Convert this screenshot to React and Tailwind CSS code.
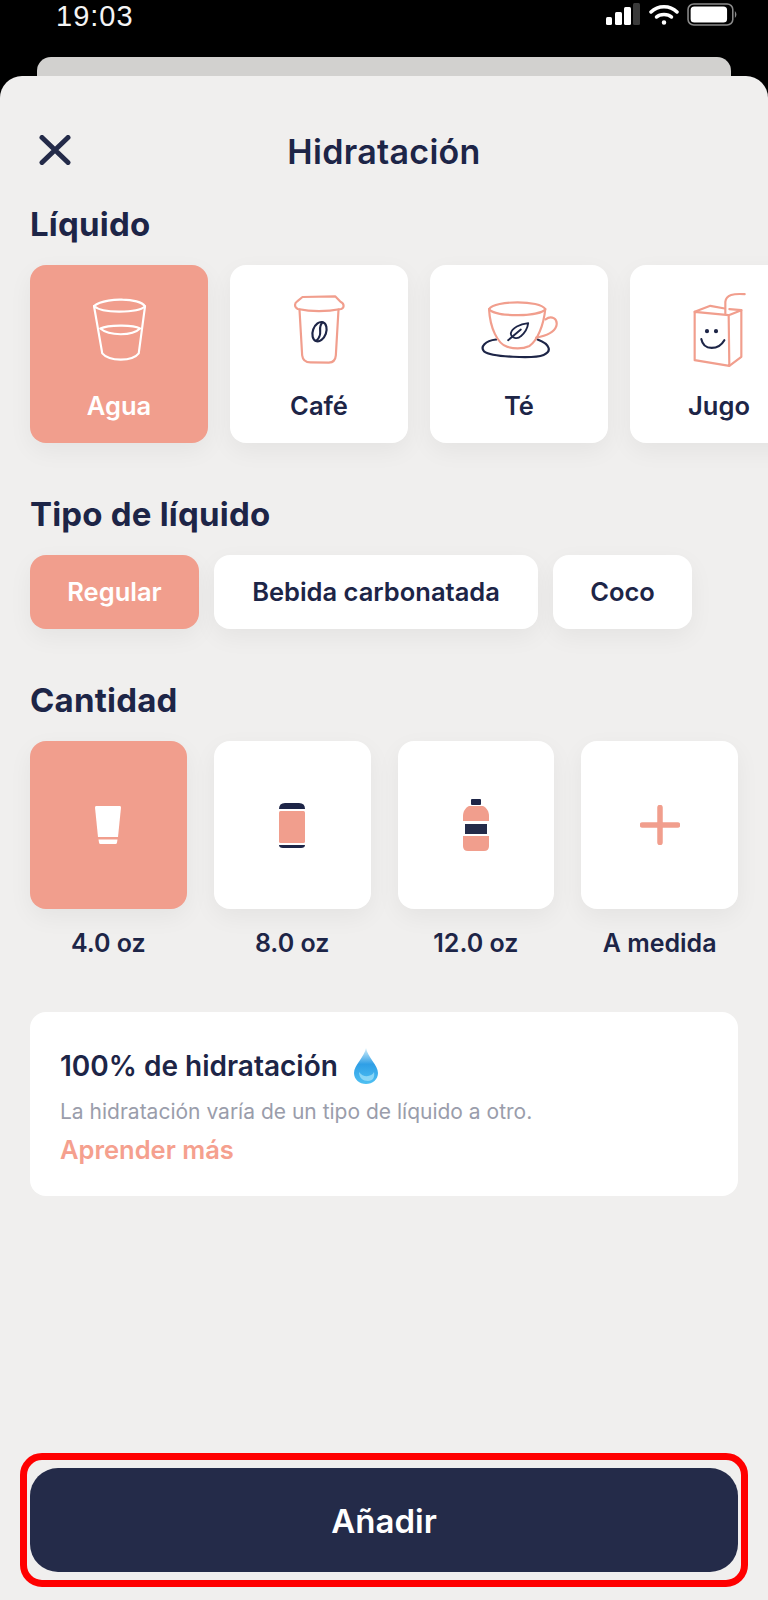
const SALMON = '#f19e8d';
const NAVY = '#1d2547';

const CloseIcon = () => (
    <svg viewBox="0 0 32 30" width="32" height="30" fill="none" stroke="#242b49" strokeWidth="5" strokeLinecap="round">
        <path d="M3 2.500 L29 27.500 M29 2.500 L3 27.500" />
    </svg>
);

const GlassIcon = () => (
    <svg viewBox="270 140 172 196" width="57" height="65" fill="none" stroke="#fff" strokeWidth="6.500" strokeLinecap="round" strokeLinejoin="round">
        <path d="M279 167 C300 150 345 147 365 148 C395 148 425 155 433 168 C420 182 385 184 355 184 C325 184 295 182 279 167 Z" />
        <path d="M279 167 L304 310 C325 335 395 335 414 310 L433 168" />
        <path d="M298 235 C320 225 395 222 418 235 C395 258 325 258 298 235 Z" />
    </svg>
);

const CoffeeIcon = () => (
    <svg viewBox="872 128 170 216" width="57" height="72" fill="none" strokeWidth="6.500" strokeLinecap="round" strokeLinejoin="round">
        <g stroke={SALMON}>
            <path d="M906 140 L1004 138 L1020 154 C1032 160 1032 172 1022 176 C980 184 930 184 892 176 C880 170 882 158 890 153 Z" />
            <path d="M897 178 L905 315 C907 332 918 336 930 336 L985 337 C1000 336 1005 328 1006 315 L1014 178" />
        </g>
        <g stroke={NAVY}>
            <ellipse cx="957" cy="244" rx="20" ry="30" transform="rotate(20 957 244)" />
            <path d="M966 216 C948 235 972 248 947 272" />
        </g>
    </svg>
);

const TeaIcon = () => (
    <svg viewBox="240 150 236 176" width="79" height="59" fill="none" strokeWidth="6.500" strokeLinecap="round" strokeLinejoin="round">
        <path d="M288 268 C255 272 240 290 252 303 C275 320 400 326 430 314 C455 304 450 282 412 268" stroke={NAVY} />
        <g stroke={SALMON}>
            <path d="M267 177 C285 150 420 150 435 177 C420 200 285 202 267 177 Z" />
            <path d="M267 177 C270 232 292 282 322 290 C345 296 370 295 388 287 C412 270 430 225 435 177" />
            <path d="M436 208 C452 195 474 204 468 228 C460 250 432 258 408 262" />
        </g>
        <g stroke={NAVY} strokeWidth="5.500">
            <path d="M384 219 C360 222 335 232 332 250 C333 264 352 268 362 258 C374 248 382 235 384 219 Z" />
            <path d="M324 270 L362 238" />
        </g>
    </svg>
);

const JuiceIcon = () => (
    <svg viewBox="880 118 162 230" width="54" height="77" fill="none" strokeWidth="6.500" strokeLinecap="round" strokeLinejoin="round">
        <g stroke={SALMON}>
            <path d="M888 180 L990 190 L992 342 L888 325 Z" />
            <path d="M990 190 L1028 175 L1028 315 L992 342" />
            <path d="M888 180 L935 162 L978 170 M992 172 L1028 175" />
            <path d="M980 185 L980 150 C982 128 1005 125 1038 127" />
        </g>
        <path d="M908 262 C915 298 960 295 977 265" stroke={NAVY} />
        <circle cx="925" cy="238" r="3" fill={NAVY} stroke={NAVY} />
        <circle cx="952" cy="238" r="3" fill={NAVY} stroke={NAVY} />
    </svg>
);

const SmallGlass = () => (
    <svg viewBox="0 0 26 38" width="26" height="38" fill="#fff">
        <path d="M1 0 H25 Q26 0 26 1.500 L23 31 H3 L0 1.500 Q0 0 1 0 Z" />
        <path d="M3.500 33.500 H22.500 L22 36.500 Q21.800 38 20.500 38 H5.500 Q4.200 38 4 36.500 Z" />
    </svg>
);

const SmallCan = () => (
    <svg viewBox="0 0 26 45" width="26" height="45">
        <path d="M0 6 Q0 0 6 0 H20 Q26 0 26 6 H0 Z" fill={NAVY} />
        <rect x="0" y="8" width="26" height="32" rx="1.500" fill={SALMON} />
        <path d="M0 42 H26 Q26 45 22 45 H4 Q0 45 0 42 Z" fill={NAVY} />
    </svg>
);

const SmallBottle = () => (
    <svg viewBox="0 0 26 52" width="26" height="52">
        <rect x="8" y="0" width="10" height="6" rx="1" fill={NAVY} />
        <path d="M6 7 H20 C24 9 26 13 26 17 V22 H0 V17 C0 13 2 9 6 7 Z" fill={SALMON} />
        <rect x="2" y="25" width="22" height="10" fill="#242b49" />
        <path d="M0 37 H26 V47 Q26 52 21 52 H5 Q0 52 0 47 Z" fill={SALMON} />
    </svg>
);

const SmallPlus = () => (
    <svg viewBox="0 0 40 40" width="40" height="40" fill="none" stroke={SALMON} strokeWidth="5.500" strokeLinecap="round">
        <path d="M20 2.500 V37.500 M2.500 20 H37.500" />
    </svg>
);

const Drop = () => (
    <svg viewBox="0 0 24 36" width="24" height="36">
        <defs>
            <linearGradient id="drop" x1="0" y1="0" x2="0" y2="1">
                <stop offset="0" stopColor="#d5f0fb" />
                <stop offset="0.45" stopColor="#2f9fe6" />
                <stop offset="1" stopColor="#4fc0f2" />
            </linearGradient>
        </defs>
        <path d="M12 0 C13.500 9 24 17 24 25 C24 31.500 18.500 36 12 36 C5.500 36 0 31.500 0 25 C0 17 10.500 9 12 0 Z" fill="url(#drop)" />
        <path d="M5 24 C5 30 9 33 14 33 C19 33 21 29 20 24 C18 29 9 30 5 24 Z" fill="#a8e4f9" opacity="0.7" />
    </svg>
);

const StatusIcons = () => (
    <div className="flex items-start">
        <svg viewBox="0 0 34 22" width="34" height="22" className="mt-[3px]">
            <rect x="0" y="14" width="6" height="8" rx="1.500" fill="#fff" />
            <rect x="9" y="9" width="7" height="13" rx="1.500" fill="#fff" />
            <rect x="18" y="4" width="7" height="18" rx="1.500" fill="#fff" />
            <rect x="27" y="0" width="7" height="22" rx="1.500" fill="#3a3a3a" />
        </svg>
        <svg viewBox="0 0 30 20" width="30" height="20" className="ml-[9px] mt-[5px]" fill="none" stroke="#fff" strokeWidth="3.500" strokeLinecap="round">
            <path d="M2 7 C9 0 21 0 28 7" />
            <path d="M7.500 12 C11 8.500 19 8.500 22.500 12" />
            <circle cx="15" cy="17.500" r="1.500" fill="#fff" strokeWidth="1.500" />
        </svg>
        <svg viewBox="0 0 49 23" width="51" height="23" className="ml-[8px] mt-[3px]" preserveAspectRatio="none">
            <rect x="1" y="1" width="43" height="21" rx="5.500" fill="none" stroke="#8a8a8a" strokeWidth="1.500" />
            <rect x="3.500" y="3.500" width="35" height="16" rx="3.500" fill="#fff" />
            <path d="M46 8 Q49 11.500 46 15 Z" fill="#8a8a8a" />
        </svg>
    </div>
);

const liquids = [
    { name: 'Agua', icon: GlassIcon, active: true },
    { name: 'Café', icon: CoffeeIcon },
    { name: 'Té', icon: TeaIcon },
    { name: 'Jugo', icon: JuiceIcon },
];

const types = [
    { name: 'Regular', width: 'w-[169px]', active: true },
    { name: 'Bebida carbonatada', width: 'w-[324px]' },
    { name: 'Coco', width: 'w-[139px]' },
];

const amounts = [
    { label: '4.0 oz', icon: SmallGlass, active: true },
    { label: '8.0 oz', icon: SmallCan },
    { label: '12.0 oz', icon: SmallBottle },
    { label: 'A medida', icon: SmallPlus },
];

const SectionTitle = ({ children, className }) => (
    <h2 className={`text-[33px] leading-[36px] font-bold tracking-[0.2px] text-[#1d2547] ${className}`}>{children}</h2>
);

export default function App() {
    return (
        <div className="w-[768px] h-[1600px] overflow-hidden bg-black flex flex-col font-['Inter',sans-serif]">
            <div className="h-[57px] shrink-0 pl-[56px] pr-[30px] flex justify-between items-start text-white">
                <span className="font-['Liberation_Sans',sans-serif] text-[29px] leading-[32px] tracking-[1px] text-[#f4f4f4]">19:03</span>
                <StatusIcons />
            </div>
            <div className="h-[19px] shrink-0 mx-[37px] rounded-t-[14px] bg-[#d2d1cf]" />
            <div className="flex-1 flex flex-col rounded-t-[22px] bg-[#f0efee] overflow-hidden">
                <div className="mt-[56px] h-[40px] px-[39px] grid grid-cols-[1fr_auto_1fr] items-center">
                    <div className="-mt-[4px]">
                        <CloseIcon />
                    </div>
                    <h1 className="text-[34px] leading-[40px] font-semibold tracking-[0.3px] text-[#1d2547]">Hidratación</h1>
                </div>

                <SectionTitle className="mt-[34px] pl-[30px]">Líquido</SectionTitle>
                <div className="mt-[23px] pl-[30px] flex gap-[22px]">
                    {liquids.map(({ name, icon: Icon, active }) => (
                        <div
                            key={name}
                            className={`w-[178px] h-[178px] shrink-0 rounded-[16px] shadow-[0_8px_24px_rgba(0,0,0,0.05)] flex flex-col items-center pt-[24px] ${active ? 'bg-[#f19e8d] text-white' : 'bg-white text-[#1d2547]'}`}
                        >
                            <div className="h-[80px] flex items-center justify-center">
                                <Icon />
                            </div>
                            <span className="mt-[22px] text-[25.500px] leading-[30px] font-semibold">{name}</span>
                        </div>
                    ))}
                </div>

                <SectionTitle className="mt-[53px] pl-[30px]">Tipo de líquido</SectionTitle>
                <div className="mt-[23px] pl-[30px] flex gap-[15px]">
                    {types.map(({ name, width, active }) => (
                        <div
                            key={name}
                            className={`${width} h-[74px] rounded-[16px] shadow-[0_8px_24px_rgba(0,0,0,0.05)] flex items-center justify-center text-[25.500px] font-semibold ${active ? 'bg-[#f19e8d] text-white' : 'bg-white text-[#1d2547]'}`}
                        >
                            {name}
                        </div>
                    ))}
                </div>

                <SectionTitle className="mt-[53px] pl-[30px]">Cantidad</SectionTitle>
                <div className="mt-[23px] px-[30px] grid grid-cols-4 gap-x-[27px]">
                    {amounts.map(({ label, icon: Icon, active }) => (
                        <div key={label} className="flex flex-col items-center">
                            <div className={`w-full h-[168px] rounded-[16px] shadow-[0_8px_24px_rgba(0,0,0,0.05)] flex items-center justify-center ${active ? 'bg-[#f19e8d]' : 'bg-white'}`}>
                                <Icon />
                            </div>
                            <span className="mt-[20px] text-[25px] leading-[28px] font-semibold text-[#1d2547]">{label}</span>
                        </div>
                    ))}
                </div>

                <div className="mt-[55px] mx-[30px] h-[184px] rounded-[16px] bg-white pl-[30px] pt-[36px]">
                    <div className="flex items-center gap-[16px] h-[36px]">
                        <span className="text-[28px] leading-[36px] font-semibold text-[#1d2547]">100% de hidratación</span>
                        <Drop />
                    </div>
                    <p className="mt-[15px] text-[21px] leading-[26px] text-[#9a9dab]">La hidratación varía de un tipo de líquido a otro.</p>
                    <p className="mt-[10px] text-[25.500px] leading-[30px] font-semibold text-[#f5a08e]">Aprender más</p>
                </div>

                <div className="relative mt-auto mb-[28px] mx-[30px]">
                    <button className="w-full h-[104px] pt-[3px] rounded-[28px] bg-[#242b49] text-white text-[33px] font-semibold">Añadir</button>
                    <div className="absolute -inset-x-[10px] -inset-y-[15px] rounded-[22px] border-[7px] border-[#ff0000]" />
                </div>
            </div>
        </div>
    );
}
